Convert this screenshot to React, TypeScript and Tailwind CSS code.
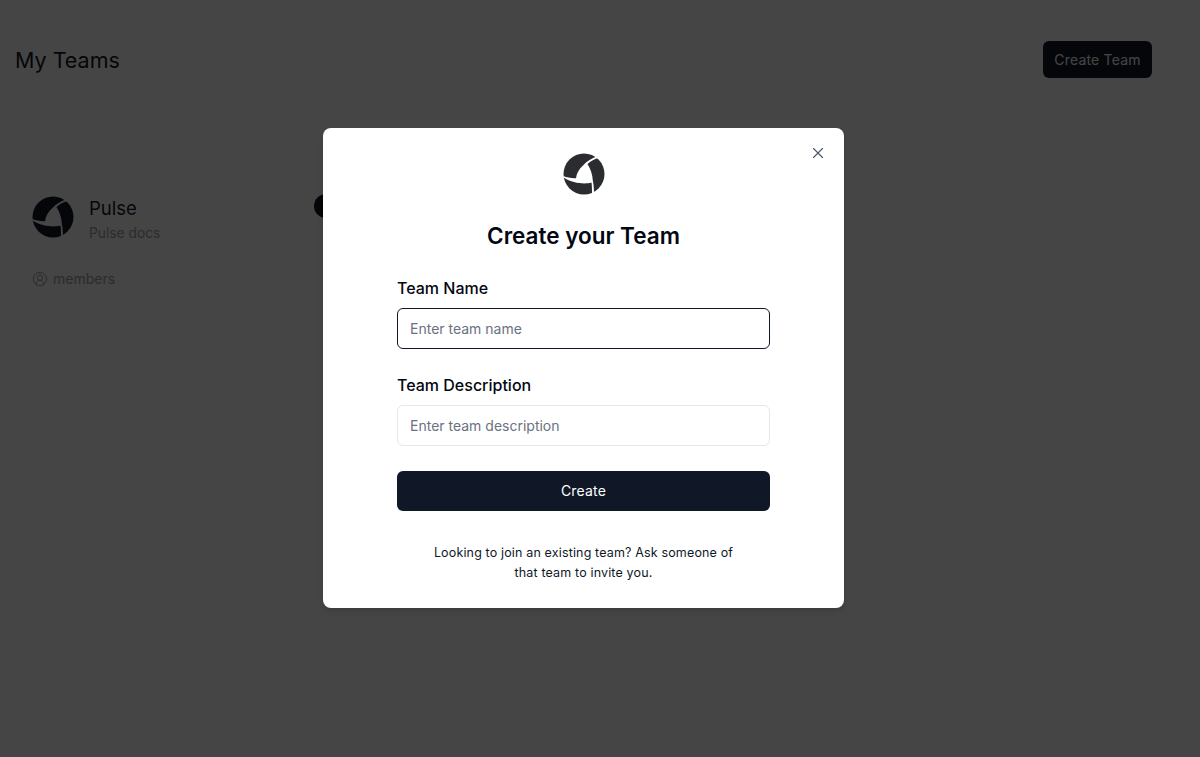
import { X, CircleUserRound } from "lucide-react"

function PulseLogo({ className, color }: { className: string; color: string }) {
  return (
    <svg viewBox="0 0 42 42" className={className}>
      <circle cx="21" cy="21" r="20.5" fill={color} />
      <path
        d="M20 12.5C23.5 8.5 29 5 35 3L36.5 4.5C31.5 6 27.5 8 24.5 11C27.5 15.5 29.5 21.5 29.8 27.5C30.8 32 31 37 31 41L29 41.5C29 37 29 33 28.5 29.5C22 31.5 10 30.5 0.5 24.5L0.4 23C4 24.5 9 25.5 13 25.2C13.5 20.5 16 16 20 12.5Z"
        fill="white"
      />
    </svg>
  )
}

function TeamCard() {
  return (
    <div className="w-[298px] pl-4 pt-[25px]">
      <div className="flex items-start gap-[15px]">
        <PulseLogo className="h-[42px] w-[42px] shrink-0" color="#111827" />
        <div>
          <h3 className="text-[18.5px] leading-6 text-gray-900">Pulse</h3>
          <p className="mt-[3px] text-[13.8px] leading-5 text-gray-400">Pulse docs</p>
        </div>
      </div>
      <div className="mt-[26px] flex items-center gap-[5px] text-sm leading-5 text-gray-400">
        <CircleUserRound className="h-4 w-4" strokeWidth={1.5} />
        <span>members</span>
      </div>
    </div>
  )
}

export default function App() {
  return (
    <div className="relative h-[757px] overflow-hidden bg-white font-['Inter',sans-serif]">
      <div className="flex items-start justify-between pl-[15px] pr-12 pt-[41px]">
        <h1 className="text-[21.5px] leading-[38px] text-gray-900">My Teams</h1>
        <button className="h-[37px] w-[109px] rounded-md bg-gray-900 text-sm font-normal tracking-[0.2px] text-white">Create Team</button>
      </div>

      <div className="mt-[92px] flex pl-4">
        <TeamCard />
        <div className="mt-[23px] h-6 w-6 rounded-full bg-gray-900" />
      </div>

      <div className="absolute inset-0 bg-black/[.73] pl-[323px] pt-[128px]">
        <div className="relative h-[480px] w-[521px] rounded-lg bg-white px-[74px] pt-[25px] shadow-md">
          <button className="absolute right-[17px] top-4 text-gray-600">
            <X className="h-[18px] w-[18px]" strokeWidth={1.5} />
          </button>
          <div className="flex justify-center">
            <PulseLogo className="h-[42px] w-[42px]" color="#2b2c30" />
          </div>
          <h2 className="mt-[25px] text-center text-[22.5px] font-semibold leading-8 text-gray-950">Create your Team</h2>

          <label className="mt-6 block text-base font-medium leading-6 text-gray-950">Team Name</label>
          <input
            placeholder="Enter team name"
            className="mt-2 block h-[41px] w-full rounded-md border border-gray-900 px-3 text-sm placeholder:text-gray-500"
          />

          <label className="mt-6 block text-base font-medium leading-6 text-gray-950">Team Description</label>
          <input
            placeholder="Enter team description"
            className="mt-2 block h-[41px] w-full rounded-md border border-gray-200 px-3 text-sm placeholder:text-gray-500"
          />

          <button className="mt-[25px] h-10 w-full rounded-md bg-gray-900 text-sm font-normal tracking-[0.2px] text-white">Create</button>

          <p className="mx-auto mt-8 w-[320px] text-center text-[12.5px] leading-5 tracking-[0.15px] text-gray-900">
            Looking to join an existing team? Ask someone of that team to invite you.
          </p>
        </div>
      </div>
    </div>
  )
}
